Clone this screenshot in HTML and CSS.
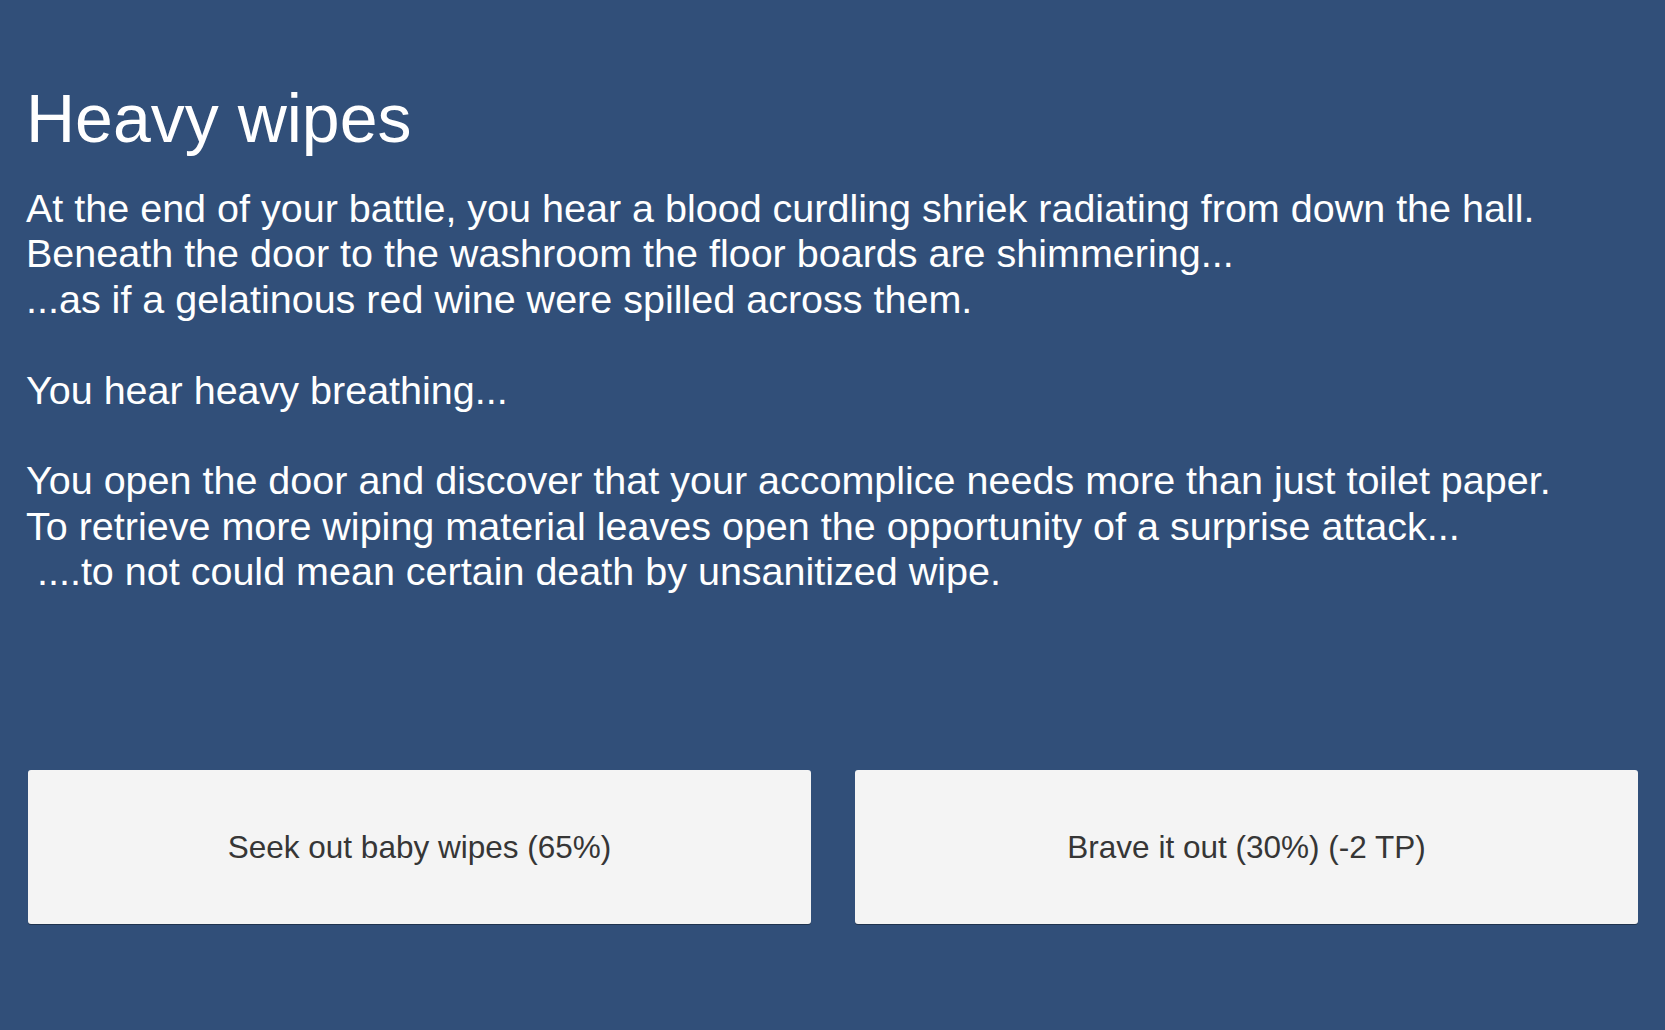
FILE: index.html
```html
<!DOCTYPE html>
<html lang="en">
<head>
<meta charset="utf-8">
<title>Heavy wipes</title>
<link rel="stylesheet" href="styles.css">
</head>
<body>
<main class="screen">
  <section class="story">
    <h1 class="title">Heavy wipes</h1>
    <p class="body">At the end of your battle, you hear a blood curdling shriek radiating from down the hall.
Beneath the door to the washroom the floor boards are shimmering...
...as if a gelatinous red wine were spilled across them.

You hear heavy breathing...

You open the door and discover that your accomplice needs more than just toilet paper.
To retrieve more wiping material leaves open the opportunity of a surprise attack...
 ....to not could mean certain death by unsanitized wipe.</p>
  </section>
  <section class="choices">
    <button class="choice" type="button">Seek out baby wipes (65%)</button>
    <button class="choice" type="button">Brave it out (30%) (-2 TP)</button>
  </section>
</main>
</body>
</html>
```

FILE: styles.css
```css
html, body {
  margin: 0;
  padding: 0;
  height: 100%;
}

body {
  background: #314f79;
  font-family: "Liberation Sans", Arial, sans-serif;
  color: #ffffff;
}

.screen {
  height: 100vh;
  box-sizing: border-box;
  display: flex;
  flex-direction: column;
  padding: 79px 27px 106px 26px;
}

.story {
  display: flex;
  flex-direction: column;
}

.title {
  margin: 0;
  font-size: 68px;
  font-weight: normal;
  line-height: 78px;
}

.body {
  margin: 29px 0 0 0;
  font-size: 39.5px;
  line-height: 45.4px;
  white-space: pre-wrap;
}

.choices {
  margin-top: auto;
  display: grid;
  grid-template-columns: 1fr 1fr;
  gap: 44px;
  padding-left: 2px;
}

.choice {
  height: 154px;
  border: none;
  border-radius: 3px;
  background: #f4f4f4;
  box-shadow: 0 1px 0 rgba(0, 0, 0, 0.35);
  font-family: "Liberation Sans", Arial, sans-serif;
  font-size: 31.5px;
  color: #363636;
  padding: 0;
  cursor: pointer;
}
```
